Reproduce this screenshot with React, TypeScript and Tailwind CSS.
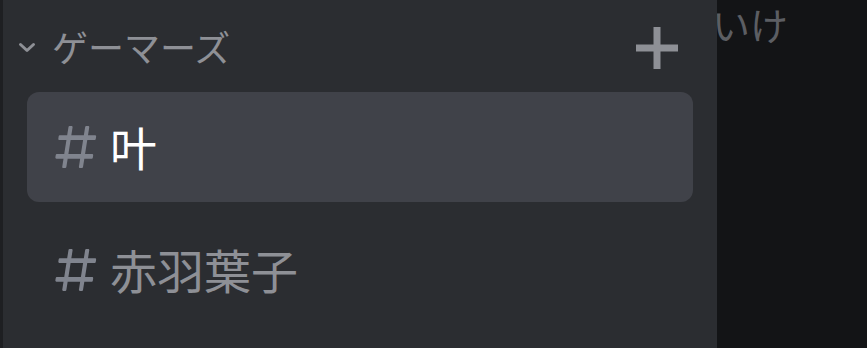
import React from "react";

const HASH_PATH =
  "M5.88657 21C5.57547 21 5.3399 20.7189 5.39427 20.4126L6.00001 17H2.59511C2.28449 17 2.04905 16.7198 2.10259 16.4138L2.27759 15.4138C2.31946 15.1746 2.52722 15 2.77011 15H6.35001L7.41001 9H4.00511C3.69449 9 3.45905 8.71977 3.51259 8.41381L3.68759 7.41381C3.72946 7.17456 3.93722 7 4.18011 7H7.76001L8.39677 3.41262C8.43914 3.17391 8.64664 3 8.88907 3H9.87344C10.1845 3 10.4201 3.28107 10.3657 3.58738L9.76001 7H15.76L16.3968 3.41262C16.4391 3.17391 16.6466 3 16.8891 3H17.8734C18.1845 3 18.4201 3.28107 18.3657 3.58738L17.76 7H21.1649C21.4755 7 21.711 7.28023 21.6574 7.58619L21.4824 8.58619C21.4406 8.82544 21.2328 9 20.9899 9H17.41L16.35 15H19.7549C20.0655 15 20.301 15.2802 20.2474 15.5862L20.0724 16.5862C20.0306 16.8254 19.8228 17 19.5799 17H16L15.3632 20.5874C15.3209 20.8261 15.1134 21 14.8709 21H13.8866C13.5755 21 13.3399 20.7189 13.3943 20.4126L14 17H8.00001L7.36325 20.5874C7.32088 20.8261 7.11337 21 6.87094 21H5.88657ZM9.41045 9L8.35045 15H14.3504L15.4104 9H9.41045Z";

function Hash() {
  return (
    <svg viewBox="0 0 24 24" className="h-[56px] w-[50px] shrink-0" preserveAspectRatio="none" fill="#80848e">
      <path fillRule="evenodd" d={HASH_PATH} />
    </svg>
  );
}

const channels = [
  { name: "叶", active: true },
  { name: "赤羽葉子", active: false },
];

export default function App() {
  return (
    <div
      className="flex h-[348px] w-[867px] overflow-hidden bg-[#2b2d31]"
      style={{ fontFamily: '"Noto Sans CJK JP", "Noto Sans", sans-serif' }}
    >
      <div className="w-[3px] shrink-0 bg-[#1e1f22]" />

      {/* channel sidebar */}
      <div className="relative z-10 flex w-[714px] shrink-0 flex-col bg-[#2b2d31] px-[24px]">
        <div className="-mx-[24px] flex h-[92px] items-center pl-[15px] pr-[39px]">
          <svg viewBox="0 0 18 11" className="mt-[2px] h-[11px] w-[18px] shrink-0" fill="none">
            <path d="M2.5 2.5l6.5 6 6.5-6" stroke="#8e9096" strokeWidth="3" strokeLinecap="round" strokeLinejoin="round" />
          </svg>
          <span className="ml-[16px] text-[36px] leading-none text-[#8e9096]">
            ゲーマーズ
          </span>
          <svg viewBox="0 0 42 42" className="ml-auto mt-[4px] h-[42px] w-[42px]" fill="#8e9096">
            <rect x="17.5" y="0" width="7" height="42" />
            <rect x="0" y="17.5" width="42" height="7" />
          </svg>
        </div>

        <div className="flex flex-col gap-[13px]">
          {channels.map((c) => (
            <div
              key={c.name}
              className={
                c.active
                  ? "flex h-[110px] items-center gap-[9px] rounded-[12px] bg-[#404249] pl-[24px]"
                  : "flex h-[110px] items-center gap-[9px] rounded-[12px] pl-[24px]"
              }
            >
              <Hash />
              <span
                className={
                  c.active
                    ? "-mt-[3px] text-[47px] leading-none text-white"
                    : "-mt-[3px] text-[47px] leading-none text-[#8e9096]"
                }
              >
                {c.name}
              </span>
            </div>
          ))}
        </div>
      </div>

      {/* chat area */}
      <div className="flex-1 overflow-hidden bg-[#131416]">
        <div className="-ml-[5px] mt-[5px] whitespace-nowrap text-[38px] leading-none text-[#5c5e63]">
          いけ
        </div>
      </div>
    </div>
  );
}
